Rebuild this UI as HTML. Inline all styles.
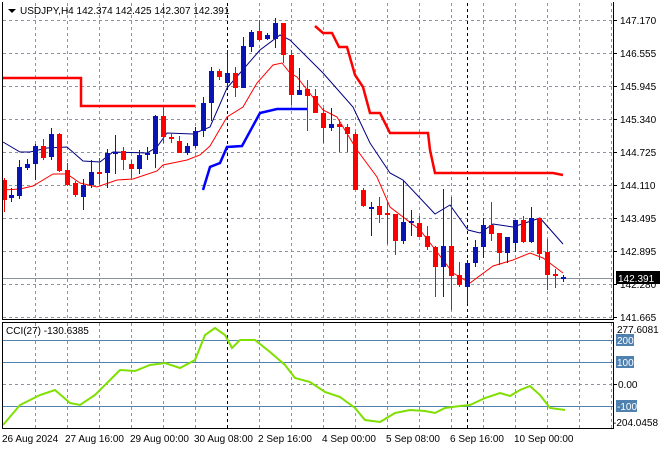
<!DOCTYPE html>
<html><head><meta charset="utf-8"><style>
body{margin:0;background:#fff;}
svg{display:block;font-family:"Liberation Sans",sans-serif;font-size:10px;}
</style></head><body>
<svg width="660" height="450" xmlns="http://www.w3.org/2000/svg">
<rect width="660" height="450" fill="#fff"/>
<g id="grid" stroke="#8a93a0" stroke-dasharray="3,3" stroke-width="1">
<g id="vg"></g>
<path d="M3 20.5H613M3 53.5H613M3 86.5H613M3 119.5H613M3 152.5H613M3 185.5H613M3 218.5H613M3 251.5H613M3 284.5H613M3 317.5H613M3 384.5H613"/>
</g>
<path d="M3 278.5H613" stroke="#8a93a0"/>
<path d="M3 340.5H613M3 362.5H613M3 406.5H613" stroke="#4f81b0"/>
<path d="M227.5 3V318M227.5 323V428M467.5 3V318M467.5 323V428" stroke="#000" stroke-dasharray="3,3"/>
<polyline fill="none" stroke="#f00" stroke-width="2.5" points="3,78 81,78 81,106 195,106"/>
<polyline fill="none" stroke="#f00" stroke-width="2.5" points="315,26 323,33 332,33 339,47 347,47 355,75 363,87 370,113 380,113 390,133 428,133 430,150 435,173 553,173 563,175"/>
<polyline fill="none" stroke="#00f" stroke-width="2.5" points="203,190 210,167 220,163 227,147 242,146 260,113 277,109 307,109"/>
<polyline fill="none" stroke="#000080" stroke-width="1" points="3,142 20,152 30,152 47,148 67,147 83,161 100,162 113,152 147,153 157,147 167,133 193,134 210,127 227,88 260,50 280,35 290,40 323,73 353,107 370,143 390,173 403,180 435,214 450,205 468,230 480,233 493,224 513,227 540,218 563,244"/>
<polyline fill="none" stroke="#f00" stroke-width="1" points="3,190 20,189 33,186 53,174 67,174 80,183 97,187 117,180 133,179 157,171 163,165 187,160 200,155 210,146 227,117 243,107 257,83 273,65 282,63 290,73 297,77 323,110 337,117 357,150 377,177 390,207 420,230 437,252 453,273 470,283 493,266 513,260 530,253 543,258 563,273"/>
<g id="candles"></g>
<polyline fill="none" stroke="#7fe000" stroke-width="2" points="3,425 20,405 40,395 55,390 70,403 80,405 95,395 110,380 120,370 135,371 150,365 165,363 180,368 195,360 205,335 215,328 225,335 232,348 240,340 255,340 270,352 285,365 295,378 310,382 325,392 340,397 355,408 365,420 380,422 395,413 410,410 425,411 435,413 445,408 460,406 470,405 485,398 500,393 510,396 520,390 530,386 540,395 550,408 565,410"/>
<path d="M2.5 2V319.5H613.5V2M2.5 322.5H613.5V428.5H2.5Z" fill="none" stroke="#000"/>
<path d="M613 20.5h4M613 53.5h4M613 86.5h4M613 119.5h4M613 152.5h4M613 185.5h4M613 218.5h4M613 251.5h4M613 284.5h4M613 317.5h4M613 384.5h4" stroke="#000"/>
<path d="M8 9h8l-4 4z" fill="#000"/>
<text x="20" y="14">USDJPY,H4  142.374 142.425 142.307 142.391</text>
<g fill="#000">
<text x="620" y="24">147.170</text><text x="620" y="57">146.555</text><text x="620" y="90">145.945</text><text x="620" y="123">145.340</text><text x="620" y="156">144.725</text><text x="620" y="189">144.110</text><text x="620" y="222">143.495</text><text x="620" y="255">142.895</text><text x="620" y="288">142.280</text><text x="620" y="321">141.665</text>
<text x="617" y="333">277.6081</text><text x="618" y="388">0.00</text><text x="613" y="426">-204.0458</text>
</g>
<rect x="616" y="271" width="44" height="13" fill="#000"/><text x="618" y="282" fill="#fff">142.391</text>
<rect x="616" y="334" width="18" height="12" fill="#4f81b0"/><text x="617" y="344" fill="#fff">200</text>
<rect x="616" y="356" width="18" height="12" fill="#4f81b0"/><text x="617" y="366" fill="#fff">100</text>
<rect x="616" y="400" width="21" height="12" fill="#4f81b0"/><text x="617" y="410" fill="#fff">-100</text>
<text x="6" y="334">CCI(27) -130.6385</text>
<g fill="#000">
<text x="2" y="442">26 Aug 2024</text><text x="65" y="442">27 Aug 16:00</text><text x="130" y="442">29 Aug 00:00</text><text x="194" y="442">30 Aug 08:00</text><text x="258" y="442">2 Sep 16:00</text><text x="322" y="442">4 Sep 00:00</text><text x="386" y="442">5 Sep 08:00</text><text x="450" y="442">6 Sep 16:00</text><text x="514" y="442">10 Sep 00:00</text>
</g>
</svg>
<script>
var NS="http://www.w3.org/2000/svg";
var vg=document.getElementById("vg");
for(var x=35;x<613;x+=32){if(x==227||x==467)continue;var l=document.createElementNS(NS,"path");l.setAttribute("d","M"+(x+.5)+" 3V318M"+(x+.5)+" 323V428");vg.appendChild(l);}
var C=[[4,'r',180,200,178,212],[11,'b',195,198,188,202],[19,'b',167,196,160,199],[27,'b',164,168,159,170],[35,'b',146,164,144,180],[43,'r',146,158,139,160],[51,'b',134,157,128,160],[59,'r',134,171,133,172],[67,'r',170,185,163,186],[75,'r',183,195,181,197],[83,'b',185,197,179,210],[91,'b',172,185,160,188],[99,'r',172,174,158,184],[107,'b',153,173,149,188],[115,'b',152,154,135,174],[123,'r',151,160,147,170],[131,'r',164,169,160,178],[139,'b',155,169,150,174],[147,'b',153,155,147,160],[155,'b',116,154,115,168],[163,'r',116,137,107,143],[171,'r',137,139,133,143],[179,'r',141,153,136,153],[187,'b',146,153,143,155],[195,'b',131,146,127,148],[203,'b',103,131,97,137],[211,'b',71,103,67,121],[219,'r',71,77,69,80],[227,'b',73,83,50,87],[235,'r',73,88,67,97],[243,'b',46,88,37,88],[251,'b',32,47,30,52],[259,'r',31,40,20,41],[267,'b',35,39,33,40],[275,'b',23,39,18,48],[283,'r',23,55,23,63],[291,'r',55,95,50,105],[299,'b',90,95,68,95],[307,'r',89,96,80,131],[315,'r',96,113,89,113],[323,'r',113,128,108,143],[331,'b',124,128,108,131],[339,'r',124,127,120,152],[347,'r',127,134,124,152],[355,'r',134,190,132,190],[363,'r',190,206,188,207],[371,'b',207,209,202,236],[379,'r',206,215,197,223],[387,'r',213,215,201,244],[395,'r',214,241,214,255],[403,'b',222,241,180,244],[411,'b',221,223,210,236],[419,'r',223,237,216,237],[427,'r',236,247,226,250],[435,'r',247,267,246,297],[443,'b',246,267,189,297],[451,'r',246,276,197,310],[459,'r',275,285,262,287],[467,'b',263,287,260,304],[475,'b',247,263,240,267],[483,'b',225,247,218,258],[491,'r',225,234,202,241],[499,'r',233,253,233,265],[507,'b',237,253,237,263],[515,'b',220,243,220,252],[523,'r',220,242,216,243],[531,'b',218,242,207,243],[539,'r',218,254,218,260],[547,'r',252,275,239,290],[555,'r',274,276,269,288],[563,'b',277,279,275,282]];
var g=document.getElementById("candles");
C.forEach(function(c){var col=c[1]=='r'?'#f00':'#0a14b4';var w=document.createElementNS(NS,"path");w.setAttribute("d","M"+(c[0]+.5)+" "+c[4]+"V"+c[5]);w.setAttribute("stroke",col);g.appendChild(w);var r=document.createElementNS(NS,"rect");r.setAttribute("x",c[0]-2);r.setAttribute("y",c[2]);r.setAttribute("width",5);r.setAttribute("height",Math.max(2,c[3]-c[2]));r.setAttribute("fill",col);g.appendChild(r);});
</script>
</body></html>
